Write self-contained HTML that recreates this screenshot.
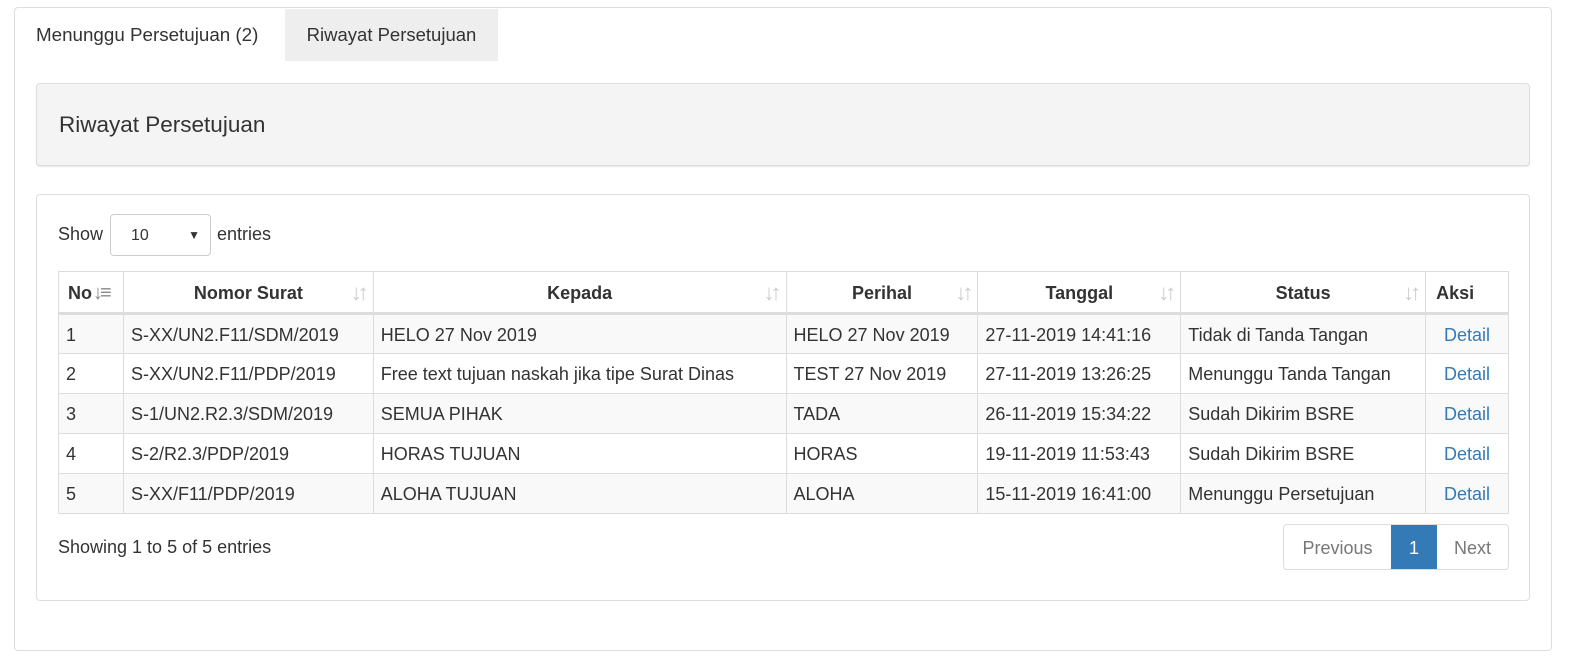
<!DOCTYPE html>
<html><head><meta charset="utf-8"><style>
*{box-sizing:border-box}
body{margin:0;background:#fff;font-family:"Liberation Sans",Arial,sans-serif;color:#333;font-size:18px;width:1570px;height:658px;overflow:hidden;position:relative}
.abs{position:absolute}
.outer{left:14px;top:7px;width:1538px;height:644px;border:1px solid #ddd;border-radius:4px}
.tab1{left:36px;top:24px;font-size:18.8px}
.tab2{left:285px;top:9px;width:213px;height:52px;background:#eee;padding-top:15px;text-align:center;font-size:18.5px}
.hp{left:36px;top:83px;width:1494px;height:83px;background:#f4f4f4;border:1px solid #ddd;border-radius:4px;box-shadow:0 1px 1px rgba(0,0,0,.1)}
.hp span{position:absolute;left:22px;top:28px;font-size:22.5px}
.p2{left:36px;top:194px;width:1494px;height:407px;border:1px solid #ddd;border-radius:4px}
.sel{left:110px;top:214px;width:101px;height:42px;border:1px solid #ccc;border-radius:4px;font-size:16px;padding:12px 0 0 20px}
.sel i{position:absolute;right:10px;top:13px;font-style:normal;font-size:12px}
table{position:absolute;left:58px;top:271px;border-collapse:collapse;width:1451px}
td,th{border:1px solid #ddd;height:40px;padding:2px 7px 0;white-space:nowrap}
th{height:42px;border-bottom:3px solid #ddd;text-align:center;position:relative}
th .s{position:absolute;right:8px;top:8px;color:#ccc;font-size:22px;font-weight:bold;letter-spacing:-4px}
tbody tr:nth-child(odd){background:#f9f9f9}
a{color:#337ab7;text-decoration:none}
.pg{left:1283px;top:524px;height:46px;display:flex;border:1px solid #ddd;border-radius:4px;overflow:hidden}
.pg div{padding:13px 0;text-align:center;color:#777}
</style></head><body>
<div class="abs outer"></div>
<div class="abs tab1">Menunggu Persetujuan (2)</div>
<div class="abs tab2">Riwayat Persetujuan</div>
<div class="abs hp"><span>Riwayat Persetujuan</span></div>
<div class="abs p2"></div>
<div class="abs" style="left:58px;top:224px">Show</div>
<div class="abs sel">10<i>▼</i></div>
<div class="abs" style="left:217px;top:224px">entries</div>
<table>
<colgroup><col style="width:65px"><col style="width:250px"><col style="width:413px"><col style="width:192px"><col style="width:203px"><col style="width:245px"><col style="width:83px"></colgroup>
<thead><tr>
<th style="text-align:left;padding-left:9px">No<span style="color:#888;font-size:20px;font-weight:bold;margin-left:1px;letter-spacing:-3px">↓≡</span></th>
<th>Nomor Surat<span class="s">↓↑</span></th>
<th>Kepada<span class="s">↓↑</span></th>
<th>Perihal<span class="s">↓↑</span></th>
<th>Tanggal<span class="s">↓↑</span></th>
<th>Status<span class="s">↓↑</span></th>
<th style="text-align:left;padding-left:10px">Aksi</th>
</tr></thead>
<tbody>
<tr><td>1</td><td>S-XX/UN2.F11/SDM/2019</td><td>HELO 27 Nov 2019</td><td>HELO 27 Nov 2019</td><td>27-11-2019 14:41:16</td><td>Tidak di Tanda Tangan</td><td style="text-align:center"><a>Detail</a></td></tr>
<tr><td>2</td><td>S-XX/UN2.F11/PDP/2019</td><td>Free text tujuan naskah jika tipe Surat Dinas</td><td>TEST 27 Nov 2019</td><td>27-11-2019 13:26:25</td><td>Menunggu Tanda Tangan</td><td style="text-align:center"><a>Detail</a></td></tr>
<tr><td>3</td><td>S-1/UN2.R2.3/SDM/2019</td><td>SEMUA PIHAK</td><td>TADA</td><td>26-11-2019 15:34:22</td><td>Sudah Dikirim BSRE</td><td style="text-align:center"><a>Detail</a></td></tr>
<tr><td>4</td><td>S-2/R2.3/PDP/2019</td><td>HORAS TUJUAN</td><td>HORAS</td><td>19-11-2019 11:53:43</td><td>Sudah Dikirim BSRE</td><td style="text-align:center"><a>Detail</a></td></tr>
<tr><td>5</td><td>S-XX/F11/PDP/2019</td><td>ALOHA TUJUAN</td><td>ALOHA</td><td>15-11-2019 16:41:00</td><td>Menunggu Persetujuan</td><td style="text-align:center"><a>Detail</a></td></tr>
</tbody></table>
<div class="abs" style="left:58px;top:537px">Showing 1 to 5 of 5 entries</div>
<div class="abs pg"><div style="width:107px">Previous</div><div style="width:46px;background:#337ab7;color:#fff">1</div><div style="width:71px">Next</div></div>
</body></html>
